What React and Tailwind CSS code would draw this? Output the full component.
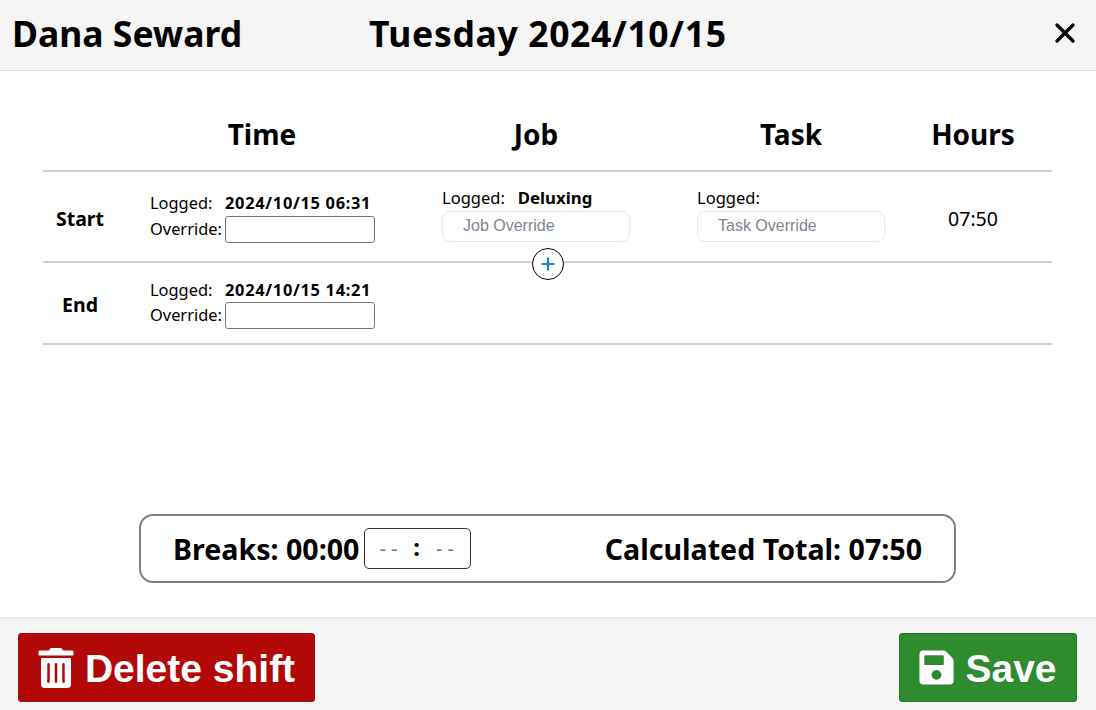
import React from "react";
import { FaTrashAlt, FaSave } from "react-icons/fa";

const sans = "font-['Noto_Sans','Open_Sans',sans-serif]";

function TimeCell({ value, compact }) {
  return (
    <div className="flex flex-col items-start pl-[10px] text-[16.4px]">
      <div className={compact ? "flex h-[24px] items-center mt-[1px]" : "flex h-[26px] items-center"}>
        <span className="w-[75px]">Logged:</span>
        <span className="font-bold tracking-[0.7px]">{value}</span>
      </div>
      <div className="flex items-center">
        <span className="w-[75px]">Override:</span>
        <input className="w-[150px] h-[27px] bg-white border border-[#767676] rounded-[3px]" />
      </div>
    </div>
  );
}

function OverrideCell({ logged, placeholder }) {
  return (
    <div className="flex flex-col items-start w-[188px] mx-auto text-[16.5px] pb-[6px]">
      <div className="flex h-[25px] items-center">
        <span>Logged:</span>
        {logged ? <span className="font-bold ml-[13px] text-[16.8px]">{logged}</span> : null}
      </div>
      <input
        placeholder={placeholder}
        className="w-[188px] h-[31px] pl-[20px] border border-[#e5e7eb] rounded-[8px] bg-white font-['Liberation_Sans',sans-serif] text-[16px] placeholder:text-[#7c8591] outline-none"
      />
    </div>
  );
}

export default function App() {
  return (
    <div className={`h-[710px] w-[1096px] flex flex-col bg-white text-black overflow-hidden ${sans}`}>
      <header className="h-[71px] shrink-0 flex items-center bg-[#f5f5f5] border-b border-[#dedede] pl-[12px] pr-[20px] pb-[2px]">
        <h1 className="w-[357px] text-[35.5px] font-bold">Dana Seward</h1>
        <h1 className="flex-1 text-[35.5px] font-bold tracking-[0.65px]">Tuesday 2024/10/15</h1>
        <svg width="22" height="22" viewBox="0 0 22 22" className="mb-[2px]">
          <path d="M3 3 L19 19 M19 3 L3 19" stroke="#000" strokeWidth="3.4" strokeLinecap="round" />
        </svg>
      </header>

      <main className="flex-1 flex flex-col">
        <div className="mx-[43px] mt-[30px] w-[1009px]">
          <div className="grid grid-cols-[97px_244px_304px_206px_158px] h-[71px] border-b-2 border-[#cfcfcf] text-[28px] font-bold text-center items-center pb-[3px]">
            <div />
            <div>Time</div>
            <div>Job</div>
            <div>Task</div>
            <div>Hours</div>
          </div>
          <div className="relative grid grid-cols-[97px_244px_304px_206px_158px] h-[91px] border-b-2 border-[#cfcfcf] items-center">
            <div className="pr-[23px] pt-[4px] text-center text-[19.5px] font-bold">Start</div>
            <TimeCell value="2024/10/15 06:31" />
            <OverrideCell logged="Deluxing" placeholder="Job Override" />
            <OverrideCell placeholder="Task Override" />
            <div className="pt-[4px] text-center text-[19.5px]">07:50</div>
            <button className="absolute left-[489px] top-[76px] w-[32px] h-[32px] rounded-full border border-black bg-white flex items-center justify-center">
              <svg width="16" height="16" viewBox="0 0 16 16">
                <path d="M8 1.5 V14.5 M1.5 8 H14.5" stroke="#1b84c0" strokeWidth="2.2" />
              </svg>
            </button>
          </div>
          <div className="grid grid-cols-[97px_244px_304px_206px_158px] h-[82px] border-b-2 border-[#cfcfcf] items-center">
            <div className="pr-[23px] pt-[4px] text-center text-[19.5px] font-bold">End</div>
            <TimeCell value="2024/10/15 14:21" compact />
          </div>
        </div>

        <div className="mt-auto mb-[34px] ml-[139px] w-[817px] h-[69px] border-2 border-[#808080] rounded-[14px] flex items-center px-[32px]">
          <span className="text-[28.6px] font-bold pt-[2px]">Breaks: 00:00</span>
          <div className="ml-[5px] w-[107px] h-[41px] border border-[#333] rounded-[5px] flex items-center pl-[14px] text-[20px] text-[#777]">
            <span className="tracking-[5px] mr-[11px]">--</span>
            <span className="font-bold text-black text-[24px] leading-none mb-[4px] mr-[16px]">:</span>
            <span className="tracking-[5px]">--</span>
          </div>
          <span className="ml-auto text-[28.6px] font-bold pt-[2px]">Calculated Total: 07:50</span>
        </div>
      </main>

      <footer className="h-[93px] shrink-0 bg-[#f5f5f5] border-t-2 border-[#ebebeb] flex items-center justify-between pl-[18px] pr-[19px] pt-[6px] font-['Liberation_Sans',sans-serif]">
        <button className="w-[297px] h-[69px] bg-[#b30808] border border-[#9c1010] rounded-[3px] flex items-center justify-center gap-[11px] text-white text-[39px] font-bold">
          <FaTrashAlt className="w-[36px] h-[40px]" />
          <span className="pt-[3px]">Delete shift</span>
        </button>
        <button className="w-[178px] h-[69px] bg-[#2e8b2e] border border-[#277527] rounded-[3px] flex items-center justify-center gap-[11px] text-white text-[39px] font-bold">
          <FaSave className="w-[35px] h-[39px]" />
          <span className="pt-[3px]">Save</span>
        </button>
      </footer>
    </div>
  );
}
